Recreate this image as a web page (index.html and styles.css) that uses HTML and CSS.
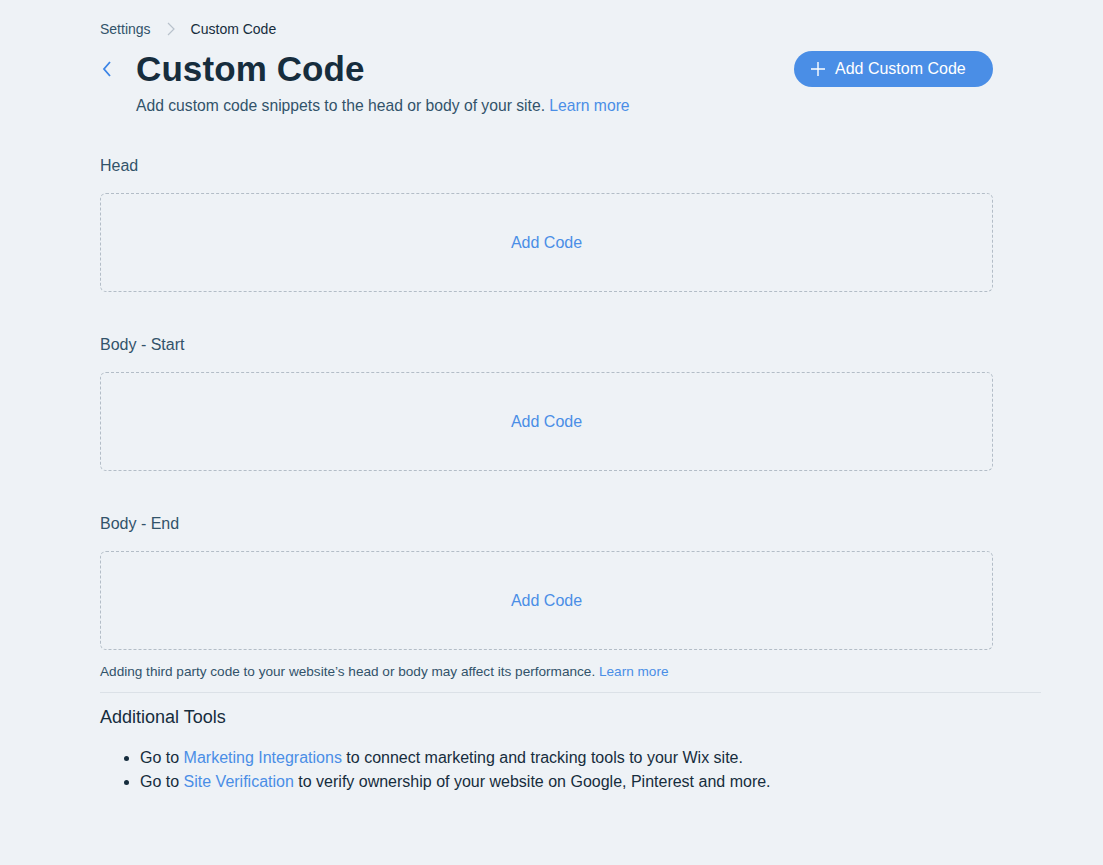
FILE: index.html
```html
<!DOCTYPE html>
<html>
<head>
<meta charset="utf-8">
<link rel="stylesheet" href="styles.css">
</head>
<body>
<div class="page">
  <nav class="crumbs">
    <span class="crumb">Settings</span>
    <svg class="crumb-sep" width="8" height="14" viewBox="0 0 8 14"><path d="M1 1 L7 7 L1 13" fill="none" stroke="#b8c2cc" stroke-width="1.2"/></svg>
    <span class="crumb current">Custom Code</span>
  </nav>
  <header class="header">
    <div class="title-row">
      <svg class="back" width="10" height="16" viewBox="0 0 10 16"><path d="M8 1 L2 8 L8 15" fill="none" stroke="#3b84e6" stroke-width="1.8"/></svg>
      <h1 class="title">Custom Code</h1>
    </div>
    <button class="add-btn"><svg width="14" height="14" viewBox="0 0 14 14"><path d="M7 0 V14 M0 7 H14" stroke="#fff" stroke-width="1.4"/></svg><span>Add Custom Code</span></button>
  </header>
  <p class="subtitle">Add custom code snippets to the head or body of your site. <a class="link">Learn more</a></p>

  <section class="section">
    <div class="label">Head</div>
    <div class="dropzone"><a class="link">Add Code</a></div>
  </section>
  <section class="section">
    <div class="label">Body - Start</div>
    <div class="dropzone"><a class="link">Add Code</a></div>
  </section>
  <section class="section last">
    <div class="label">Body - End</div>
    <div class="dropzone"><a class="link">Add Code</a></div>
  </section>
  <p class="note">Adding third party code to your website’s head or body may affect its performance. <a class="link">Learn more</a></p>
  <div class="divider"></div>
  <h2 class="tools-title">Additional Tools</h2>
  <ul class="tools">
    <li>Go to <a class="link">Marketing Integrations</a> to connect marketing and tracking tools to your Wix site.</li>
    <li>Go to <a class="link">Site Verification</a> to verify ownership of your website on Google, Pinterest and more.</li>
  </ul>
</div>
</body>
</html>
```
FILE: styles.css
```css
html, body {
  margin: 0;
  padding: 0;
  background: #eef2f6;
  font-family: "Liberation Sans", Arial, sans-serif;
  color: #162d3d;
}
.page {
  width: 941px;
  margin-left: 100px;
  padding-top: 20px;
}
.crumbs {
  display: flex;
  align-items: center;
  height: 18px;
  font-size: 14px;
}
.crumb { color: #32536a; }
.crumb.current { color: #162d3d; }
.crumb-sep { margin: 0 16px 0 16px; }
.header {
  width: 893px;
  display: flex;
  justify-content: space-between;
  align-items: center;
  margin-top: 9px;
}
.title-row {
  display: flex;
  align-items: center;
  margin-top: 1px;
}
.back { margin-left: 2px; margin-right: 24px; }
.title {
  margin: 0;
  font-size: 35px;
  font-weight: bold;
  line-height: 42px;
  color: #162d3d;
  letter-spacing: 0.1px;
}
.add-btn {
  height: 36px;
  width: 199px;
  border: none;
  border-radius: 18px;
  background: #4a8ee6;
  color: #fff;
  font-family: inherit;
  font-size: 16px;
  display: flex;
  align-items: center;
  padding: 0 0 0 17px;
  gap: 10px;
}
.subtitle {
  margin: 6px 0 0 36px;
  font-size: 15.7px;
  line-height: 20px;
  color: #32536a;
}
.link { color: #4a8ee6; text-decoration: none; }
.section { margin-top: 40px; width: 893px; }
.label {
  font-size: 16px;
  line-height: 20px;
  color: #32536a;
}
.dropzone {
  margin-top: 17px;
  height: 97px;
  border: 1px dashed #b3bdc7;
  border-radius: 6px;
  display: flex;
  align-items: center;
  justify-content: center;
  font-size: 16px;
}
.section + .section { margin-top: 43px; }
.note {
  margin: 14px 0 0;
  font-size: 13.6px;
  line-height: 16px;
  color: #32536a;
}
.divider {
  margin-top: 12px;
  height: 1px;
  background: #dbe1e7;
}
.tools-title {
  margin: 14px 0 0;
  font-size: 18px;
  font-weight: normal;
  line-height: 20px;
  color: #162d3d;
}
.tools {
  margin: 19px 0 0;
  padding-left: 40px;
  font-size: 16px;
  line-height: 24px;
  color: #162d3d;
}
```
